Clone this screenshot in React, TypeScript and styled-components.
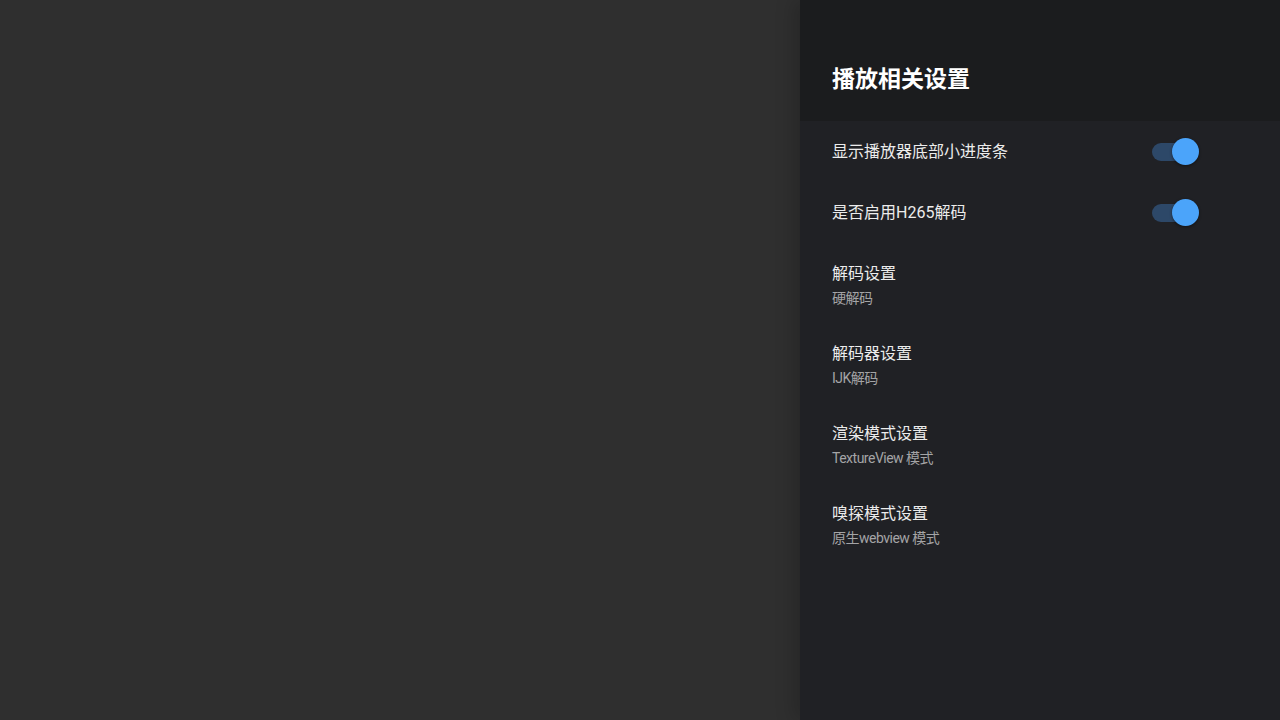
import React from 'react'
import styled, { createGlobalStyle } from 'styled-components'

const GlobalStyle = createGlobalStyle`
  html, body {
    margin: 0;
    padding: 0;
    background: #2f2f2f;
    font-family: Roboto, "Noto Sans CJK SC", sans-serif;
  }
`

const Screen = styled.div`
  display: flex;
  height: 720px;
  justify-content: flex-end;
  width: 1280px;
`

const Panel = styled.div`
  background: #202125;
  box-shadow: -6px 0 18px rgba(0, 0, 0, 0.18);
  display: flex;
  flex-direction: column;
  height: 100%;
  width: 480px;
`

const Header = styled.div`
  background: #1b1c1e;
  box-sizing: border-box;
  height: 121px;
  padding: 65px 32px 0;
`

const Title = styled.h1`
  color: #ffffff;
  font-size: 23px;
  font-weight: 700;
  line-height: 30px;
  margin: 0;
`

const Row = styled.div<{ twoLine?: boolean }>`
  align-items: ${(props) => (props.twoLine ? 'flex-start' : 'center')};
  box-sizing: border-box;
  display: flex;
  height: ${(props) => (props.twoLine ? '80px' : '61px')};
  justify-content: space-between;
  padding: ${(props) => (props.twoLine ? '19px 32px 15px' : '0 32px')};
`

const Texts = styled.div`
  display: flex;
  flex-direction: column;
`

const Label = styled.div`
  color: #ececec;
  font-size: 16px;
  line-height: 24px;
`

const Sub = styled.div`
  color: #a4a4a6;
  font-size: 14px;
  letter-spacing: -0.5px;
  line-height: 20px;
  margin-top: 2px;
`

const Switch = styled.div`
  height: 28px;
  margin-right: 49px;
  position: relative;
  width: 47px;
`

const Track = styled.div`
  background: #2d4868;
  border-radius: 9px;
  height: 18px;
  left: 0;
  position: absolute;
  right: 2px;
  top: 5px;
`

const Thumb = styled.div`
  background: #4ba4fa;
  border-radius: 50%;
  box-shadow: 0 1px 3px rgba(0, 0, 0, 0.45);
  height: 27px;
  position: absolute;
  right: 0;
  top: 0;
  width: 27px;
`

const toggles = ['显示播放器底部小进度条', '是否启用H265解码']

const options = [
  { label: '解码设置', value: '硬解码' },
  { label: '解码器设置', value: 'IJK解码' },
  { label: '渲染模式设置', value: 'TextureView 模式' },
  { label: '嗅探模式设置', value: '原生webview 模式' },
]

export default function App() {
  return (
    <>
      <GlobalStyle />
      <Screen>
        <Panel>
          <Header>
            <Title>播放相关设置</Title>
          </Header>
          {toggles.map((label) => (
            <Row key={label}>
              <Label>{label}</Label>
              <Switch>
                <Track />
                <Thumb />
              </Switch>
            </Row>
          ))}
          {options.map((item) => (
            <Row key={item.label} twoLine>
              <Texts>
                <Label>{item.label}</Label>
                <Sub>{item.value}</Sub>
              </Texts>
            </Row>
          ))}
        </Panel>
      </Screen>
    </>
  )
}
